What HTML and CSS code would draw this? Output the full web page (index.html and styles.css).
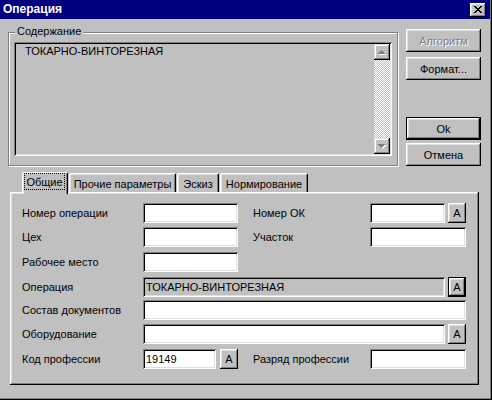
FILE: index.html
```html
<!DOCTYPE html>
<html lang="ru">
<head>
<meta charset="utf-8">
<title>Операция</title>
<link rel="stylesheet" href="styles.css">
</head>
<body>
<div class="window">
  <div class="titlebar">
    <span class="title">Операция</span>
    <span class="close">
      <svg width="16" height="14" viewBox="0 0 16 14" shape-rendering="crispEdges">
        <path fill="#000" d="M4 3h2v1h-2z M10 3h2v1h-2z M5 4h2v1h-2z M9 4h2v1h-2z M6 5h4v1h-4z M7 6h2v1h-2z M6 7h4v1h-4z M5 8h2v1h-2z M9 8h2v1h-2z M4 9h2v1h-2z M10 9h2v1h-2z"/>
      </svg>
    </span>
  </div>
  <div class="client">
    <div class="top">
      <div class="group">
        <span class="legend">Содержание</span>
        <div class="memo">
          <div class="memo-text">ТОКАРНО-ВИНТОРЕЗНАЯ</div>
          <div class="vscroll">
            <div class="sbtn">
              <svg width="16" height="16" viewBox="0 0 16 16" shape-rendering="crispEdges">
                <path fill="#fff" d="M8 7h1v1h-1z M7 8h3v1h-3z M6 9h5v1h-5z M5 10h7v1h-7z"/>
                <path fill="#808080" d="M7 6h1v1h-1z M6 7h3v1h-3z M5 8h5v1h-5z M4 9h7v1h-7z"/>
              </svg>
            </div>
            <div class="strack"></div>
            <div class="sbtn">
              <svg width="16" height="16" viewBox="0 0 16 16" shape-rendering="crispEdges">
                <path fill="#fff" d="M5 7h7v1h-7z M6 8h5v1h-5z M7 9h3v1h-3z M8 10h1v1h-1z"/>
                <path fill="#808080" d="M4 6h7v1h-7z M5 7h5v1h-5z M6 8h3v1h-3z M7 9h1v1h-1z"/>
              </svg>
            </div>
          </div>
        </div>
      </div>
      <div class="buttons">
        <div class="btn disabled">Алгоритм</div>
        <div class="btn btn-format">Формат...</div>
        <div class="btn default btn-ok">Ok</div>
        <div class="btn btn-cancel">Отмена</div>
      </div>
    </div>

    <div class="tabsec">
      <div class="tabstrip">
        <div class="tab selected tab-1"><span class="focus">Общие</span></div>
        <div class="tab tab-2">Прочие параметры</div>
        <div class="tab tab-3">Эскиз</div>
        <div class="tab tab-4">Нормирование</div>
      </div>
      <div class="panel">
        <div class="form">
          <div class="lbl r1">Номер операции</div>
          <div class="field c2 r1"></div>
          <div class="lbl c4 r1">Номер ОК</div>
          <div class="combo c5 r1"><div class="field grow"></div><div class="abtn">A</div></div>

          <div class="lbl r2">Цех</div>
          <div class="field c2 r2"></div>
          <div class="lbl c4 r2">Участок</div>
          <div class="field c5 r2"></div>

          <div class="lbl r3">Рабочее место</div>
          <div class="field c2 r3"></div>

          <div class="lbl r4">Операция</div>
          <div class="combo wide r4"><div class="field grow readonly">ТОКАРНО-ВИНТОРЕЗНАЯ</div><div class="abtn focused">A</div></div>

          <div class="lbl r5">Состав документов</div>
          <div class="field wide r5"></div>

          <div class="lbl r6">Оборудование</div>
          <div class="combo wide r6"><div class="field grow"></div><div class="abtn">A</div></div>

          <div class="lbl r7">Код профессии</div>
          <div class="combo code c2 r7"><div class="field grow">19149</div><div class="abtn">A</div></div>
          <div class="lbl c4 r7">Разряд профессии</div>
          <div class="field c5 r7"></div>
        </div>
      </div>
    </div>
  </div>
</div>
</body>
</html>
```
FILE: styles.css
```css
* { box-sizing: border-box; }
html, body { margin: 0; padding: 0; }
body {
  width: 492px;
  height: 400px;
  overflow: hidden;
  background: #c0c0c0;
  font-family: "Liberation Sans", Arial, sans-serif;
  font-size: 11px;
  color: #000;
}

.window {
  width: 492px;
  height: 400px;
  background: #c0c0c0;
  box-shadow: inset -1px -1px #000, inset -2px -2px #808080;
  display: flex;
  flex-direction: column;
}

/* title bar */
.titlebar {
  height: 19px;
  width: 490px;
  flex: none;
  background: #000080;
  color: #fff;
  display: flex;
  align-items: flex-start;
  justify-content: space-between;
  padding: 0 4px 0 3px;
}
.title {
  font-weight: bold;
  font-size: 12px;
  line-height: 19px;
}
.close {
  margin-top: 3px;
  width: 16px;
  height: 14px;
  background: #c0c0c0;
  box-shadow: inset -1px -1px #000, inset 1px 1px #fff, inset -2px -2px #808080, inset 2px 2px #dfdfdf;
}
.close svg { display: block; }

.client { flex: 1; }

/* top section */
.top {
  display: flex;
  align-items: flex-start;
}
.group {
  position: relative;
  margin: 13px 0 0 8px;
  width: 390px;
  height: 134px;
  border: 1px solid #808080;
  box-shadow: inset 1px 1px #fff, 1px 1px #fff;
  padding: 9px 0 0 5px;
}
.legend {
  position: absolute;
  left: 6px;
  top: -8px;
  padding: 0 2px;
  background: #c0c0c0;
  line-height: 13px;
}
.memo {
  width: 378px;
  height: 114px;
  display: flex;
  padding: 2px;
  box-shadow: inset 1px 1px #808080, inset -1px -1px #fff, inset 2px 2px #000, inset -2px -2px #dfdfdf;
}
.memo-text {
  flex: 1;
  padding: 1px 0 0 9px;
  line-height: 13px;
}
.vscroll {
  width: 16px;
  display: flex;
  flex-direction: column;
  background: repeating-conic-gradient(#c0c0c0 0 25%, #fff 0 50%) 0 0 / 2px 2px;
}
.sbtn {
  height: 16px;
  background: #c0c0c0;
  box-shadow: inset -1px -1px #000, inset 1px 1px #dfdfdf, inset -2px -2px #808080, inset 2px 2px #fff;
}
.sbtn svg { display: block; }
.strack { flex: 1; }

.buttons {
  margin: 10px 0 0 8px;
  width: 75px;
  display: flex;
  flex-direction: column;
}
.btn {
  height: 23px;
  display: flex;
  align-items: center;
  justify-content: center;
  background: #c0c0c0;
  box-shadow: inset -1px -1px #000, inset 1px 1px #fff, inset -2px -2px #808080, inset 2px 2px #dfdfdf;
}
.btn.disabled {
  color: #808080;
  text-shadow: 1px 1px #fff;
}
.btn.default {
  border: 1px solid #000;
}
.btn-format { margin-top: 5px; }
.btn-ok { margin-top: 37px; }
.btn-cancel { margin-top: 3px; }

/* tabs */
.tabsec {
  margin: 6px 0 0 10px;
}
.tabstrip {
  display: flex;
  align-items: flex-end;
  gap: 1px;
  height: 20px;
  margin-left: 12px;
  position: relative;
  z-index: 1;
}
.tab {
  height: 19px;
  display: flex;
  align-items: center;
  justify-content: center;
  background: #c0c0c0;
  border-top: 1px solid #fff;
  border-left: 1px solid #fff;
  border-right: 1px solid #000;
  border-radius: 2px 2px 0 0;
  box-shadow: inset -1px 0 #808080, inset 1px 1px #dfdfdf;
  padding-top: 1px;
}
.tab.selected {
  height: 22px;
  margin-bottom: -2px;
  align-items: flex-start;
  padding-top: 0;
}
.tab-1 { width: 46px; }
.tab-2 { width: 107px; }
.tab-3 { width: 42px; }
.tab-4 { width: 88px; }
.focus {
  display: flex;
  align-items: center;
  justify-content: center;
  width: 41px;
  height: 17px;
  margin-left: -1px;
  border: 1px dotted #000;
}

.panel {
  width: 469px;
  height: 193px;
  background: #c0c0c0;
  box-shadow: inset -1px -1px #000, inset 1px 1px #fff, inset -2px -2px #808080, inset 2px 2px #dfdfdf;
  padding: 11px 0 0 12px;
}
.form {
  display: grid;
  grid-template-columns: 121px 95px 15px 117px 96px;
  grid-template-rows: 24px 25px 25px 23px 24px 25px 20px;
  align-items: start;
}
.lbl {
  grid-column: 1;
  line-height: 20px;
  height: 20px;
  white-space: nowrap;
}
.lbl.c4 { grid-column: 4; }
.c2 { grid-column: 2; }
.c5 { grid-column: 5; }
.wide { grid-column: 2 / 6; }
.r1 { grid-row: 1; }
.r2 { grid-row: 2; }
.r3 { grid-row: 3; }
.r4 { grid-row: 4; }
.r5 { grid-row: 5; }
.r6 { grid-row: 6; }
.r7 { grid-row: 7; }

.field {
  height: 20px;
  background: #fff;
  box-shadow: inset 1px 1px #808080, inset -1px -1px #fff, inset 2px 2px #000, inset -2px -2px #dfdfdf;
  padding: 0 0 0 3px;
  line-height: 20px;
  white-space: nowrap;
  overflow: hidden;
}
.field.readonly { background: #c0c0c0; }
.combo {
  display: flex;
  gap: 3px;
  height: 20px;
}
.combo.code { gap: 4px; }
.grow { flex: 1; }
.abtn {
  width: 18px;
  height: 20px;
  flex: none;
  display: flex;
  align-items: center;
  justify-content: center;
  background: #c0c0c0;
  box-shadow: inset -1px -1px #000, inset 1px 1px #fff, inset -2px -2px #808080, inset 2px 2px #dfdfdf;
}
.abtn.focused {
  border: 1px solid #000;
}
```
